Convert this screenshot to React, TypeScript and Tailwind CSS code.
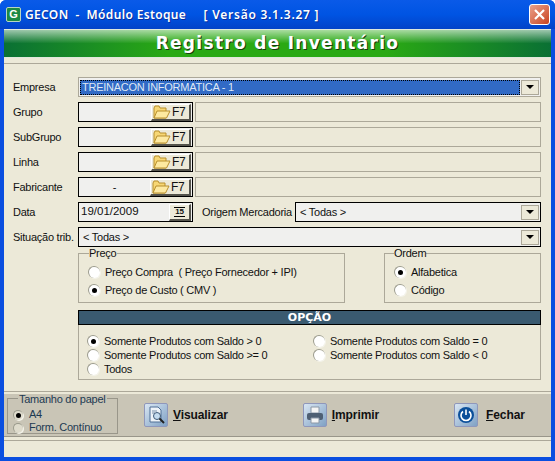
import * as React from 'react';

const font = "font-['Liberation_Sans',Arial,sans-serif]";

function Radio({ on, small }: { on?: boolean; small?: boolean }) {
  return (
    <span className={`flex shrink-0 items-center justify-center rounded-full border-l border-t border-[#9a9a8c] shadow-[1px_1px_0_#f4f3ea] ${small ? 'h-[10px] w-[10px] bg-[#dedbcc]' : 'h-[12px] w-[12px] bg-white'}`}>
      {on && <span className="h-[5px] w-[5px] rounded-full bg-black" />}
    </span>
  );
}

function Folder() {
  return (
    <svg width="18" height="14" viewBox="0 0 18 14">
      <path d="M1 3 L1 13 L13 13 L13 3 L7 3 L6 1 L2 1 Z" fill="#f7d774" stroke="#b88f2c" strokeWidth="1" />
      <path d="M4 6 L17 6 L13.5 13 L1 13 Z" fill="#fde9a0" stroke="#b88f2c" strokeWidth="1" />
    </svg>
  );
}

function ArrowBox() {
  return (
    <span className="flex h-[15px] w-[18px] shrink-0 items-center justify-center border border-[#aca899] bg-[#ece9d8]">
      <span className="h-0 w-0 border-x-[4px] border-t-[4px] border-x-transparent border-t-black" />
    </span>
  );
}

function Bevel({ className, children }: { className: string; children: React.ReactNode }) {
  return (
    <span className={`flex items-center border-b-2 border-r-2 border-l border-t border-b-[#55544c] border-r-[#55544c] border-l-white border-t-white bg-[#ece9d8] ${className}`}>
      {children}
    </span>
  );
}

function Row({ label, children, className }: { label: string; children: React.ReactNode; className?: string }) {
  return (
    <div className={`flex h-[20px] items-center ${className ?? ''}`}>
      <span className="w-[74px] shrink-0 whitespace-nowrap pl-[9px]">{label}</span>
      {children}
    </div>
  );
}

function Lookup({ label, value }: { label: string; value?: string }) {
  return (
    <Row label={label}>
      <span className="flex h-full w-[115px] shrink-0 items-center justify-end border border-black bg-[#f0f0ee] pr-[1px]">
        {value && <span className="flex-1 text-center">{value}</span>}
        <Bevel className={`h-[17px] gap-[1px] pl-[1px] ${value ? 'w-[41px]' : 'w-[40px]'}`}>
          <Folder />
          <span className="text-[12px] leading-none">F7</span>
        </Bevel>
      </span>
      <span className="ml-[2px] h-full flex-1 border border-[#aca899] bg-[#ece9d8]" />
    </Row>
  );
}

function Option({ on, text, className }: { on?: boolean; text: string; className?: string }) {
  return (
    <div className={`flex items-center gap-[5px] ${className ?? ''}`}>
      <Radio on={on} />
      <span>{text}</span>
    </div>
  );
}

function ToolIcon({ children }: { children: React.ReactNode }) {
  return (
    <span className="flex h-[24px] w-[24px] items-center justify-center rounded-[2px] border border-[#8f97bb] bg-gradient-to-br from-[#d9e6f2] to-[#7fa1c4]">
      {children}
    </span>
  );
}

function ToolButton({ letter, rest, icon, gap, className }: { letter: string; rest: string; icon: React.ReactNode; gap: string; className: string }) {
  return (
    <div className={`flex items-center ${gap} ${className}`}>
      <ToolIcon>{icon}</ToolIcon>
      <span className="text-[12px] font-bold tracking-[-0.1px] text-[#111]">
        <span className="underline">{letter}</span>
        {rest}
      </span>
    </div>
  );
}

export default function App() {
  return (
    <div className={`${font} flex h-[461px] w-[555px] flex-col overflow-hidden rounded-t-[6px] bg-[#0a4ee0] text-[11px] leading-none tracking-[-0.25px] text-[#111]`}>
      {/* title bar */}
      <div className="flex h-[29px] shrink-0 items-center bg-gradient-to-b from-[#0a5ae8] via-[#0054e3] to-[#0342c8] pl-[6px] pr-[5px]">
        <span className="flex h-[15px] w-[15px] items-center justify-center rounded-[2px] border border-[#b9d6c0] bg-[#1c8a45] text-[11px] font-bold text-white">G</span>
        <span className="ml-[4px] whitespace-pre font-['Noto_Sans',sans-serif] text-[12px] font-semibold tracking-[0.35px] text-white [text-shadow:1px_1px_0_#0a2f9a]">
          GECON  -  Módulo Estoque     <span className="tracking-[0.75px]">[ Versão 3.1.3.27 ]</span>
        </span>
        <span className="ml-auto flex h-[21px] w-[21px] items-center justify-center rounded-[3px] border border-white bg-gradient-to-br from-[#e9a08a] to-[#c8401c]">
          <svg width="13" height="13" viewBox="0 0 13 13">
            <path d="M2 2 L11 11 M11 2 L2 11" stroke="white" strokeWidth="2.2" />
          </svg>
        </span>
      </div>

      <div className="mx-[4px] mb-[4px] flex flex-1 flex-col bg-[#ece9d8]">
        {/* green header */}
        <div className="flex h-[29px] shrink-0 items-center justify-center border-y border-[#dfe8dc] bg-[linear-gradient(180deg,rgba(255,255,255,0.6),rgba(255,255,255,0)_50%),linear-gradient(90deg,#0a7034,#2aa914_30%,#2aa914_70%,#0a7034)]">
          <span className="font-['DejaVu_Sans',sans-serif] text-[17px] font-bold tracking-[1.3px] text-white [text-shadow:1px_1px_0_#1a3a10]">
            Registro de Inventário
          </span>
        </div>

        {/* form */}
        <div className="mt-[5px] flex h-[329px] shrink-0 flex-col border-y border-[#aca899] pt-[13px] pr-[10px]">
          <Row label="Empresa">
            <span className="flex h-full flex-1 items-center border border-[#aca899] bg-[#f0f0ee] pr-[1px]">
              <span className="mx-[1px] flex h-[15px] flex-1 items-center border border-dotted border-black bg-[#316ac5] pl-[1px] text-[#dfe8f5]">
                TREINACON INFORMATICA - 1
              </span>
              <ArrowBox />
            </span>
          </Row>
          <div className="mt-[5px] flex flex-col gap-[5px]">
            <Lookup label="Grupo" />
            <Lookup label="SubGrupo" />
            <Lookup label="Linha" />
            <Lookup label="Fabricante" value="-" />
          </div>
          <Row label="Data" className="mt-[5px]">
            <span className="flex h-full w-[115px] shrink-0 items-center justify-between border border-black bg-[#f0f0ee] pl-[2px] pr-[1px]">
              <span className="text-[11.5px] tracking-normal">19/01/2009</span>
              <Bevel className="h-[17px] w-[22px] justify-center">
                <span className="border-y border-black px-[1px] text-[8px] font-bold leading-[8px]">15</span>
              </Bevel>
            </span>
            <span className="ml-[9px] w-[93px] shrink-0 whitespace-nowrap">Origem Mercadoria</span>
            <span className="flex h-full flex-1 items-center border border-black bg-[#f0f0ee] pl-[4px] pr-[1px]">
              <span className="flex-1">&lt; Todas &gt;</span>
              <ArrowBox />
            </span>
          </Row>
          <Row label="Situação trib." className="mt-[5px]">
            <span className="flex h-full flex-1 items-center border border-black bg-[#f0f0ee] pl-[4px] pr-[1px]">
              <span className="flex-1">&lt; Todas &gt;</span>
              <ArrowBox />
            </span>
          </Row>

          <div className="ml-[74px] mt-[1px] flex h-[55px] justify-between">
            <fieldset className="w-[267px] border border-[#aca899] pl-[9px]">
              <legend className="ml-[1px] bg-[#ece9d8] leading-[11px]">Preço</legend>
              <div className="flex flex-col gap-[6px] pt-[7px]">
                <Option text="Preço Compra  ( Preço Fornecedor + IPI)" className="whitespace-pre" />
                <Option on text="Preço de Custo ( CMV )" />
              </div>
            </fieldset>
            <fieldset className="w-[157px] border border-[#aca899] pl-[9px]">
              <legend className="bg-[#ece9d8] leading-[11px]">Ordem</legend>
              <div className="flex flex-col gap-[6px] pt-[7px]">
                <Option on text="Alfabetica" />
                <Option text="Código" />
              </div>
            </fieldset>
          </div>

          <div className="ml-[74px] mt-[7px] flex h-[70px] flex-col border-x border-b border-[#aca899]">
            <div className="-mx-px flex h-[15px] items-center justify-center border border-black bg-[#3a5a70] font-['DejaVu_Sans',sans-serif] text-[11px] font-bold tracking-normal text-white">
              OPÇÃO
            </div>
            <div className="flex pl-[8px] pt-[10px]">
              <div className="flex w-[226px] flex-col gap-[2px]">
                <Option on text="Somente Produtos com Saldo > 0" className="h-[12px]" />
                <Option text="Somente Produtos com Saldo >= 0" className="h-[12px]" />
                <Option text="Todos" className="h-[12px]" />
              </div>
              <div className="flex flex-col gap-[2px]">
                <Option text="Somente Produtos com Saldo = 0" className="h-[12px]" />
                <Option text="Somente Produtos com Saldo < 0" className="h-[12px]" />
              </div>
            </div>
          </div>
        </div>

        {/* toolbar */}
        <div className="mt-[2px] flex h-[43px] shrink-0 items-center border-b border-[#99968a] bg-[#c9c5b6]">
          <fieldset className="mb-[3px] ml-[3px] h-[40px] w-[111px] border border-[#99968a] pl-[5px] text-[#1d3a52]">
            <legend className="ml-[5px] px-[1px] leading-[10px]">Tamanho do papel</legend>
            <div className="mt-[6px] flex h-[10px] items-center gap-[6px]">
              <Radio on small />
              <span>A4</span>
            </div>
            <div className="mt-[3px] flex h-[10px] items-center gap-[6px]">
              <Radio small />
              <span>Form. Contínuo</span>
            </div>
          </fieldset>
          <ToolButton
            letter="V"
            rest="isualizar"
            gap="gap-[5px]"
            className="ml-[26px]"
            icon={
              <svg width="20" height="20" viewBox="0 0 20 20">
                <path d="M4 2 H12 L15 5 V17 H4 Z" fill="#eef3f8" stroke="#4e6f95" />
                <path d="M6 6 H11 M6 8 H9" stroke="#7c93ad" />
                <circle cx="11" cy="11" r="3.5" fill="#c5dcef" stroke="#3f5a78" />
                <path d="M13.5 13.5 L18 18" stroke="#222" strokeWidth="2" />
              </svg>
            }
          />
          <ToolButton
            letter="I"
            rest="mprimir"
            gap="gap-[5px]"
            className="ml-[75px]"
            icon={
              <svg width="20" height="20" viewBox="0 0 20 20">
                <path d="M6 2 H14 V8 H6 Z" fill="#f5f5f5" stroke="#8a97a6" />
                <rect x="2" y="8" width="16" height="7" rx="2" fill="#4e5f73" />
                <path d="M6 13 H14 V18 H6 Z" fill="#f5f5f5" stroke="#8a97a6" />
              </svg>
            }
          />
          <ToolButton
            letter="F"
            rest="echar"
            gap="gap-[8px]"
            className="ml-[75px]"
            icon={
              <svg width="20" height="20" viewBox="0 0 20 20">
                <circle cx="10" cy="10" r="8" fill="#0b4f9a" />
                <path d="M7 6.5 A5 5 0 1 0 13 6.5" fill="none" stroke="white" strokeWidth="1.6" />
                <path d="M10 4.5 V10" stroke="white" strokeWidth="1.6" />
              </svg>
            }
          />
        </div>
        <div className="mt-[3px] flex-1 border-t border-[#aca899]" />
      </div>
    </div>
  );
}
